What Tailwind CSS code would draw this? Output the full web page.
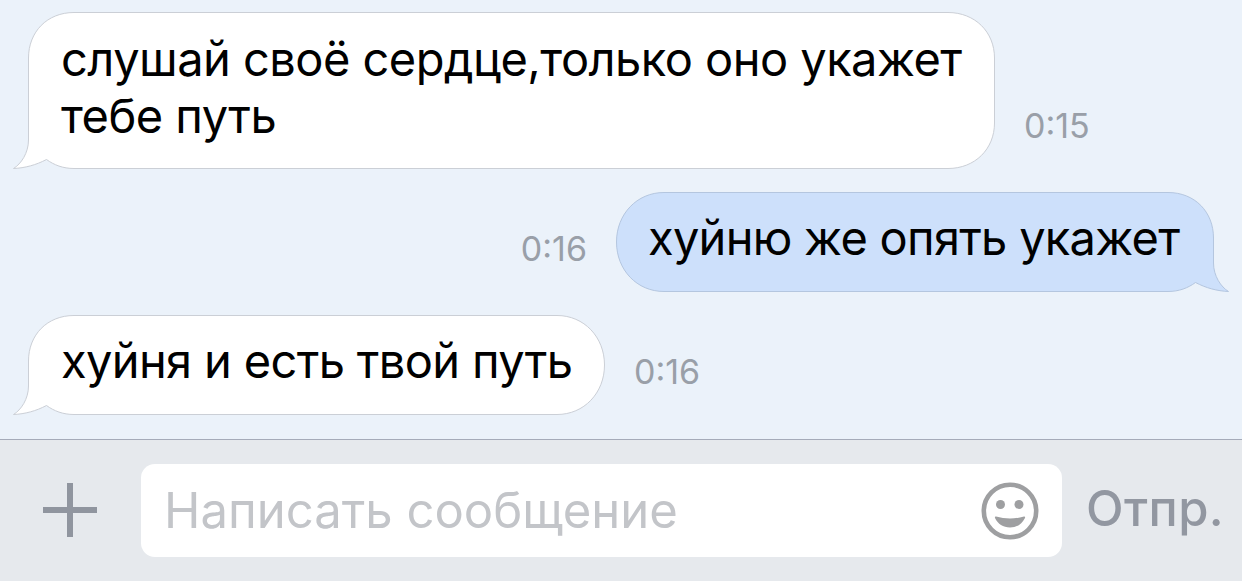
<!DOCTYPE html>
<html lang="ru">
<head>
  <meta charset="utf-8">
  <title>Сообщения</title>
  <meta name="viewport" content="width=device-width, initial-scale=1">
  <script src="https://cdn.jsdelivr.net/npm/@tailwindcss/browser@4"></script>
</head>
<body class="font-['Inter',sans-serif] bg-[#ebf2fa] text-black">
  <main class="flex flex-col h-[581px] overflow-hidden">

    <!-- Messages -->
    <section class="flex flex-col grow gap-[23px] pt-3">

      <div class="flex items-end pl-[13px]">
        <div class="relative w-[982px] h-[157px] pl-[48px] pt-[18px]">
          <svg class="absolute inset-0" width="982" height="157" viewBox="0 0 982 157" fill="#fff" stroke="#cbcfd6">
            <path d="M.5 156.500C8 152 15.500 141 15.500 128V46C15.500 20 34 .5 61 .5H935C962 .5 981.500 20 981.500 46V111C981.500 137 962 156.500 935 156.500H61C50 156.500 41 153 33.500 147.500C23 153 12 156 .5 156.500Z"/>
          </svg>
          <p class="relative text-[47px] leading-[57px] tracking-[-0.53px] whitespace-nowrap">слушай своё сердце,только оно укажет<br>тебе путь</p>
        </div>
        <time class="ml-[29px] mb-[23px] text-[34px] leading-10 text-[#999fa8]">0:15</time>
      </div>

      <div class="flex items-end justify-end pr-[13px]">
        <time class="mr-[29px] mb-[23px] text-[34px] leading-10 text-[#999fa8]">0:16</time>
        <div class="relative w-[613px] h-[100px] pl-[32px] pt-[17px]">
          <svg class="absolute inset-0" width="613" height="100" viewBox="0 0 613 100" fill="#cde0fb" stroke="#b4c6df">
            <path d="M612.500 99.500C605 95 597.500 84 597.500 71V46C597.500 20 579 .5 552 .5H48C21 .5 .5 22 .5 50C.5 78 21 99.500 48 99.500H552C563 99.500 572 96 579.500 90.500C590 96 601 99 612.500 99.500Z"/>
          </svg>
          <p class="relative text-[47px] leading-[57px] tracking-[-0.73px] whitespace-nowrap">хуйню же опять укажет</p>
        </div>
      </div>

      <div class="flex items-end pl-[13px]">
        <div class="relative w-[592px] h-[100px] pl-[48px] pt-[17px]">
          <svg class="absolute inset-0" width="592" height="100" viewBox="0 0 592 100" fill="#fff" stroke="#cbcfd6">
            <path d="M.5 99.500C8 95 15.500 84 15.500 71V46C15.500 20 34 .5 61 .5H544C571 .5 591.500 22 591.500 50C591.500 78 571 99.500 544 99.500H61C50 99.500 41 96 33.500 90.500C23 96 12 99 .5 99.500Z"/>
          </svg>
          <p class="relative text-[47px] leading-[57px] tracking-[-0.65px] whitespace-nowrap">хуйня и есть твой путь</p>
        </div>
        <time class="ml-[29px] mb-[23px] text-[34px] leading-10 text-[#999fa8]">0:16</time>
      </div>
    </section>

    <!-- Input bar -->
    <footer class="flex items-center h-[142px] shrink-0 bg-[#e6e9ed] border-t border-[#a5abb9]">
      <button class="ml-[43px] mb-px">
        <svg width="54" height="54" viewBox="0 0 54 54" stroke="#90959f" stroke-width="6">
          <path d="M27 0V54M0 27H54"/>
        </svg>
      </button>
      <div class="flex items-center justify-between w-[921px] h-[93px] ml-11 px-[23px] rounded-[14px] bg-white">
        <span class="mb-px text-[49px] leading-[57px] text-[#c3c5c9]">Написать сообщение</span>
        <svg width="58" height="58" viewBox="0 0 58 58" fill="#9e9fa1">
          <circle cx="29" cy="29" r="26.200" fill="none" stroke="#9e9fa1" stroke-width="4.600"/>
          <circle cx="19.500" cy="22.500" r="4.500"/>
          <circle cx="38" cy="22.500" r="4.500"/>
          <path d="M15 34.500Q29 38.500 43 34.500Q44.500 34.300 44 36C41 42 36 45.500 29 45.500S17 42 14 36Q13.500 34.300 15 34.500Z"/>
        </svg>
      </div>
      <button class="ml-[24px] mb-[5px] text-[49px] leading-[57px] tracking-[0.4px] font-medium text-[#9297a1]">Отпр.</button>
    </footer>
  </main>
</body>
</html>
